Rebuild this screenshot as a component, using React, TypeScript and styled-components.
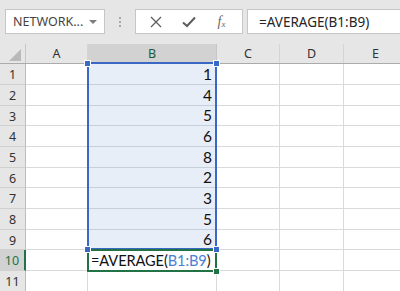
import React from "react";
import styled, { createGlobalStyle } from "styled-components";

const Global = createGlobalStyle`
  html, body { margin: 0; padding: 0; background: #e6e6e6; overflow: hidden; }
  * { box-sizing: border-box; }
`;

const UI_FONT = `"Noto Sans", "Open Sans", "DejaVu Sans", sans-serif`;
const CELL_FONT = `"Lato", "Liberation Sans", sans-serif`;
const GREEN = "#217346";
const BLUE = "#3a68c6";

const Page = styled.div`
  width: 400px;
  height: 291px;
  overflow: hidden;
  background: #e6e6e6;
  font-family: ${UI_FONT};
`;

const FormulaBar = styled.div`
  height: 44px;
  display: flex;
  align-items: flex-start;
  padding: 9px 0 0 5px;
`;

const Box = styled.div`
  height: 25px;
  background: #ffffff;
  border: 1px solid #c6c6c6;
  display: flex;
  align-items: center;
`;

const NameBox = styled(Box)`
  width: 100px;
  padding: 0 0 0 7px;
  font-size: 12.5px;
  color: #444;
  justify-content: space-between;
`;

const Caret = styled.span`
  width: 0;
  height: 0;
  margin-right: 7px;
  border-left: 4px solid transparent;
  border-right: 4px solid transparent;
  border-top: 4px solid #7d7d7d;
`;

const Grip = styled.div`
  width: 30px;
  height: 25px;
  display: flex;
  flex-direction: column;
  align-items: center;
  justify-content: center;
  gap: 2px;
  & > i {
    display: block;
    width: 2px;
    height: 2px;
    background: #a8a8a8;
  }
`;

const ButtonsBox = styled(Box)`
  width: 108px;
  padding: 0 0 0 3px;
`;

const IconBtn = styled.span`
  width: 33px;
  height: 23px;
  display: flex;
  align-items: center;
  justify-content: center;
  color: #5d5d5d;
`;

const Fx = styled.span`
  font-family: "Liberation Serif", "DejaVu Serif", serif;
  font-style: italic;
  font-size: 14px;
  color: #6a6a6a;
  & > sub {
    font-size: 9px;
    vertical-align: baseline;
    position: relative;
    top: 1px;
  }
`;

const FormulaInput = styled(Box)`
  flex: 1;
  margin-left: 4px;
  padding-left: 11px;
  border-right: none;
  font-size: 13.5px;
  color: #262626;
`;

const Sheet = styled.div`
  position: relative;
`;

const cols = [
  { label: "A", w: 62 },
  { label: "B", w: 129 },
  { label: "C", w: 63 },
  { label: "D", w: 64 },
  { label: "E", w: 64 },
];

const HeaderRow = styled.div`
  display: flex;
  height: 19px;
  border-bottom: 1px solid #ababab;
  box-sizing: content-box;
`;

const Corner = styled.div`
  width: 26px;
  flex: none;
  border-right: 1px solid #c6c6c6;
  display: flex;
  align-items: flex-end;
  justify-content: flex-end;
  padding: 0 4px 2px 0;
`;

const ColHeader = styled.div<{ $w: number; $sel?: boolean }>`
  width: ${(p) => p.$w}px;
  flex: none;
  display: flex;
  align-items: center;
  justify-content: center;
  font-size: 12.5px;
  color: ${(p) => (p.$sel ? "#1e5a3c" : "#333")};
  background: ${(p) => (p.$sel ? "#d2d2d2" : "transparent")};
  border-right: 1px solid ${(p) => (p.$sel ? "#c6c6c6" : "#d4d4d4")};
  box-shadow: ${(p) => (p.$sel ? `inset 0 -2px 0 ${GREEN}` : "none")};
  margin-bottom: ${(p) => (p.$sel ? "-1px" : "0")};
  padding-bottom: ${(p) => (p.$sel ? "1px" : "0")};
  height: ${(p) => (p.$sel ? "20px" : "19px")};
`;

const Row = styled.div<{ $h: number }>`
  display: flex;
  height: ${(p) => p.$h}px;
`;

const RowHeader = styled.div<{ $active?: boolean }>`
  width: 26px;
  flex: none;
  display: flex;
  align-items: center;
  justify-content: center;
  padding-top: 1px;
  font-size: 12.5px;
  color: ${(p) => (p.$active ? GREEN : "#333")};
  background: ${(p) => (p.$active ? "#d2d2d2" : "#e6e6e6")};
  border-bottom: 1px solid #d0d0d0;
  border-right: ${(p) => (p.$active ? `2px solid ${GREEN}` : "1px solid #bdbdbd")};
`;

const Cell = styled.div<{ $w: number; $sel?: boolean }>`
  position: relative;
  width: ${(p) => p.$w}px;
  flex: none;
  background: ${(p) => (p.$sel ? "#e8eef8" : "#ffffff")};
  border-right: 1px solid #dadada;
  border-bottom: 1px solid ${(p) => (p.$sel ? "#c8cfdc" : "#dadada")};
  display: flex;
  align-items: flex-end;
  justify-content: flex-end;
  padding: 0 4px 0 3px;
  font-family: ${CELL_FONT};
  font-size: 15.5px;
  line-height: 19px;
  color: #111;
  white-space: nowrap;
`;

const FormulaCell = styled(Cell)`
  justify-content: flex-start;
  padding-left: 3px;
  font-size: 14.6px;
  letter-spacing: -0.1px;
  z-index: 1;
`;

const RefText = styled.span`
  color: #4a7fd6;
`;

const RangeOutline = styled.div`
  position: absolute;
  left: 87px;
  top: 18px;
  width: 130px;
  height: 188px;
  border: 2px solid ${BLUE};
  pointer-events: none;
`;

const ActiveOutline = styled.div`
  position: absolute;
  left: 87px;
  top: 205px;
  width: 130px;
  height: 23px;
  border: 2px solid ${GREEN};
  pointer-events: none;
  z-index: 2;
`;

const Handle = styled.div<{ $x: number; $y: number; $c: string }>`
  position: absolute;
  left: ${(p) => p.$x}px;
  top: ${(p) => p.$y}px;
  width: 5px;
  height: 5px;
  background: ${(p) => p.$c};
  outline: 1px solid #ffffff;
  z-index: 3;
`;

const rowHeights = [21, 21, 20, 21, 21, 20, 21, 21, 20, 21, 21];
const values = [1, 4, 5, 6, 8, 2, 3, 5, 6];

export default function App() {
  return (
    <>
      <Global />
      <Page>
        <FormulaBar>
          <NameBox>
            <span>NETWORK...</span>
            <Caret />
          </NameBox>
          <Grip>
            <i />
            <i />
            <i />
          </Grip>
          <ButtonsBox>
            <IconBtn>
              <svg width="12" height="12" viewBox="0 0 12 12">
                <path d="M1 1 L11 11 M11 1 L1 11" stroke="#5d5d5d" strokeWidth="1.3" fill="none" />
              </svg>
            </IconBtn>
            <IconBtn>
              <svg width="14" height="12" viewBox="0 0 14 12">
                <path d="M1 6.5 L5 10 L13 1.5" stroke="#5d5d5d" strokeWidth="2" fill="none" />
              </svg>
            </IconBtn>
            <IconBtn>
              <Fx>
                f<sub>x</sub>
              </Fx>
            </IconBtn>
          </ButtonsBox>
          <FormulaInput>=AVERAGE(B1:B9)</FormulaInput>
        </FormulaBar>
        <Sheet>
          <HeaderRow>
            <Corner>
              <svg width="12" height="12" viewBox="0 0 12 12">
                <path d="M12 0 L12 12 L0 12 Z" fill="#b9b9b9" />
              </svg>
            </Corner>
            {cols.map((c) => (
              <ColHeader key={c.label} $w={c.w} $sel={c.label === "B"}>
                {c.label}
              </ColHeader>
            ))}
          </HeaderRow>
          {rowHeights.map((h, i) => {
            const r = i + 1;
            return (
              <Row key={r} $h={h}>
                <RowHeader $active={r === 10}>{r}</RowHeader>
                {cols.map((c) => {
                  const inRange = c.label === "B" && r <= 9;
                  if (c.label === "B" && r === 10) {
                    return (
                      <FormulaCell key={c.label} $w={c.w}>
                        =AVERAGE(<RefText>B1:B9</RefText>)
                      </FormulaCell>
                    );
                  }
                  return (
                    <Cell key={c.label} $w={c.w} $sel={inRange}>
                      {inRange ? values[i] : ""}
                    </Cell>
                  );
                })}
              </Row>
            );
          })}
          <RangeOutline />
          <ActiveOutline />
          <Handle $x={85} $y={17} $c={BLUE} />
          <Handle $x={214} $y={17} $c={BLUE} />
          <Handle $x={85} $y={203} $c={BLUE} />
          <Handle $x={214} $y={203} $c={BLUE} />
          <Handle $x={214} $y={225} $c={GREEN} />
        </Sheet>
      </Page>
    </>
  );
}
